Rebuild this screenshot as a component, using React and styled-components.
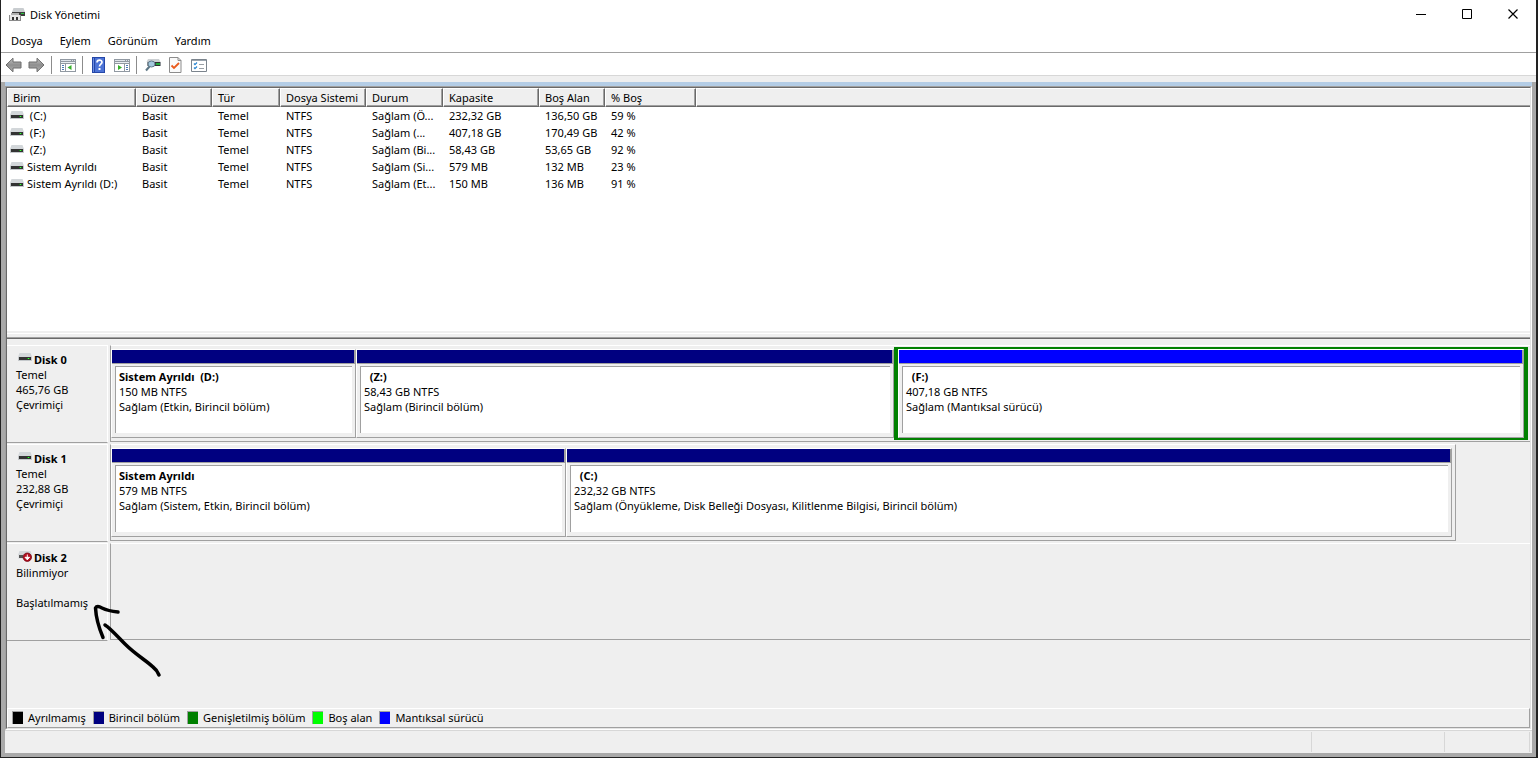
import React from 'react';
import styled, { createGlobalStyle } from 'styled-components';

const c = {
  face: '#efefef',
  frame: '#a9a9a9',
  shadow: '#a0a0a0',
  dark: '#696969',
  soft: '#e3e3e3',
  hair: '#d7d7d7',
  accent: '#b4cde6',
  primary: '#000080',
  extended: '#008000',
  free: '#00ff00',
  logical: '#0000ff',
};

const Global = createGlobalStyle`
  *, *::before, *::after { box-sizing: border-box; }
  body {
    margin: 0;
    background: #fff;
    color: #000;
    font: 11px/15px "Noto Sans", "Open Sans", sans-serif;
  }
  button { font: inherit; color: inherit; background: none; border: 0; padding: 0; }
`;

const Window = styled.div`
  position: relative;
  display: flex;
  flex-direction: column;
  min-height: 100vh;
  border: solid #222;
  border-width: 0 2px 1px 1px;
`;

const TitleBar = styled.header`
  display: flex;
  align-items: center;
  height: 29px;
  padding-left: 8px;
`;

const Title = styled.h1`
  flex: 1;
  margin: 0 0 0 5px;
  font-size: 11px;
  font-weight: 400;
`;

const CaptionButton = styled.button`
  display: grid;
  place-items: center;
  width: 46px;
  height: 29px;
`;

const MenuBar = styled.nav`
  display: flex;
  gap: 1px;
  height: 24px;
  padding: 0 2px;
  border-bottom: 1px solid ${c.shadow};
`;

const MenuButton = styled.button`
  padding: 0 8px;
`;

const ToolBar = styled.div`
  display: flex;
  align-items: center;
  height: 23px;
  padding: 2px 0 0 1px;
  border-bottom: 1px solid ${c.hair};
`;

const ToolButton = styled.button`
  display: grid;
  place-items: center;
  width: 23px;
  height: 20px;
`;

const ToolDivider = styled.span`
  width: 1px;
  height: 18px;
  margin: 0 4px 0 3px;
  background: #8c8c8c;
`;

const Strip = styled.div`
  height: 6px;
  background: ${c.face};
`;

const Client = styled.main`
  flex: 1;
  display: flex;
  flex-direction: column;
  padding: 0 4px 4px;
  background: ${c.frame};
`;

const Pane = styled.div`
  flex: 1;
  display: flex;
  flex-direction: column;
  border-top: 4px solid ${c.accent};
  background: ${c.face};
`;

const Sunken = styled.div`
  flex: 1;
  display: flex;
  flex-direction: column;
  border: 1px solid;
  border-color: ${c.shadow} #fff #fff ${c.shadow};
`;

const SunkenInner = styled.div`
  flex: 1;
  display: flex;
  flex-direction: column;
  border: 1px solid;
  border-color: ${c.dark} ${c.soft} ${c.soft} ${c.dark};
`;

const VolumeList = styled.section`
  height: 243px;
  background: #fff;
`;

const Table = styled.table`
  width: 100%;
  table-layout: fixed;
  border-collapse: separate;
  border-spacing: 0;
  text-align: left;
`;

const Col = styled.col`
  width: ${(p) => (p.$w ? `${p.$w}px` : 'auto')};
`;

const HeadCell = styled.th`
  height: 19px;
  padding: 0 0 0 5px;
  border: 1px solid;
  border-color: #fff ${c.dark} ${c.dark} #fff;
  box-shadow: inset -1px -1px ${c.shadow};
  background: ${c.face};
  font-weight: 400;
  white-space: nowrap;

  &:last-child { border-right: 0; box-shadow: inset 0 -1px ${c.shadow}; }
`;

const Cell = styled.td`
  height: 17px;
  padding: 0 0 0 6px;
  white-space: pre;
`;

const NameCell = styled.td`
  padding: 0 0 0 3px;
`;

const NameBox = styled.div`
  display: flex;
  align-items: center;
  gap: 3px;
  white-space: pre;
`;

const Splitter = styled.div`
  height: 8px;
  border-bottom: 1px solid ${c.dark};
  box-shadow: inset 0 -1px ${c.shadow}, inset 0 2px ${c.face}, inset 0 3px #fff;
`;

const DiskArea = styled.section`
  flex: 1;
  padding: 6px 0;
`;

const DiskRow = styled.article`
  display: grid;
  grid-template-columns: 103px 1fr;
  align-items: start;
  margin-bottom: 1px;
`;

const DiskLabel = styled.div`
  height: 98px;
  margin-right: 2px;
  padding: 6px 0 0 9px;
  border: solid #fff;
  border-width: 1px 1px 0 0;
  border-bottom: 1px solid ${c.shadow};
  white-space: pre-line;
`;

const DiskName = styled.h2`
  display: flex;
  gap: 2px;
  margin: 0;
  padding-left: 2px;
  font-size: 11px;
  font-weight: 700;
`;

const Track = styled.div`
  display: flex;
  align-items: center;
  width: ${(p) => p.$width};
  height: 97px;
  padding-right: ${(p) => (p.$closed ? 3 : 2)}px;
  border: 1px solid;
  border-color: #fff ${(p) => (p.$closed ? c.shadow : 'transparent')} ${c.shadow} ${c.shadow};
  border-right-width: ${(p) => (p.$closed ? 1 : 0)}px;
`;

const Volume = styled.div`
  flex: ${(p) => p.$size} 1 0;
  min-width: 0;
  height: 89px;
  border: 1px solid;
  border-color: #fff ${c.shadow} ${c.shadow} #fff;
`;

const Extended = styled.div`
  display: flex;
  flex: ${(p) => p.$size} 1 0;
  min-width: 0;
  padding: 2px 4px;
  background: ${c.extended};

  ${Volume} { background: ${c.face}; }
`;

const VolumeBar = styled.div`
  height: 14px;
  background: ${(p) => p.$color};
  border-bottom: 1px solid ${c.shadow};
  box-shadow: inset -1px 0 ${c.shadow};
`;

const VolumeBox = styled.div`
  height: 67px;
  margin: 2px 3px 4px;
  padding: 2px 0 0 3px;
  border: solid ${c.shadow};
  border-width: 1px 0 0 1px;
  background: #fff;
  overflow: hidden;
  white-space: pre;
`;

const VolumeName = styled.strong`
  display: block;
  font-weight: 700;
`;

const Legend = styled.ul`
  display: flex;
  align-items: center;
  gap: 7px;
  height: 20px;
  margin: 0;
  padding: 0 0 2px 4px;
  border: 1px solid;
  border-color: #fff ${c.shadow} ${c.shadow} #fff;
  list-style: none;
`;

const LegendItem = styled.li`
  display: flex;
  align-items: center;
  gap: 5px;
`;

const Swatch = styled.span`
  width: 11px;
  height: 13px;
  border: solid ${c.shadow};
  border-width: 1px 0 0 1px;
  background: ${(p) => p.$color};
`;

const StatusBar = styled.footer`
  display: flex;
  justify-content: flex-end;
  height: 23px;
  padding: 1px 2px 1px 0;
  border-top: 1px solid ${c.hair};
  background: ${c.face};
`;

const StatusCell = styled.span`
  width: ${(p) => p.$w}px;
  border-left: 1px solid ${c.hair};

  &:last-child { border-right: 1px solid ${c.hair}; }
`;

const Annotation = styled.svg`
  position: absolute;
  left: 89px;
  top: 600px;
  pointer-events: none;
`;

const DriveIcon = ({ missing }) => (
  <svg width="14" height="12" viewBox="0 0 14 12" aria-hidden="true">
    <path d="M1.5 1h11L14 5H0z" fill="#d3d7da" />
    {missing ? (
      <>
        <path d="M0 5h14v4H0z" fill="#e4e6e8" />
        <path d="M1 5h4v3H1z" fill="#555" />
        <circle cx="9.3" cy="7.200" r="4.200" fill="#b40f20" stroke="#700813" strokeWidth=".8" />
        <path d="M9.300 4.500v5M7 7.300h4.600L9.300 9.800z" stroke="#fff" strokeWidth="1" fill="#fff" />
      </>
    ) : (
      <>
        <path d="M0 5h14v4H0z" fill="#c5c9cc" />
        <path d="M1 5h12v3H1z" fill="#333" />
        <path d="M9 6h3v1H9z" fill="#138a13" />
        <path d="M10 6h1v1h-1z" fill="#3dff3d" />
      </>
    )}
  </svg>
);

const AppIcon = () => (
  <svg width="16" height="15" viewBox="0 0 16 15" aria-hidden="true">
    <path d="M4.500 1h10L16 5H3z" fill="#c9cdd0" />
    <path d="M3 5h13v4H3z" fill="#3d3d3d" />
    <path d="M12 6h3v1h-3z" fill="#27c53c" />
    <path d="M2 6h8v2H2z" fill="#b0b0b0" />
    <path d="M0 8h12v6H0z" fill="#8a8a8a" />
    <path d="M1 8h10v5H1z" fill="#e8e8e8" />
    <path d="M3 10h2v3H3zM7 10h2v3H7z" fill="#333" />
  </svg>
);

const ArrowIcon = ({ forward }) => (
  <svg width="17" height="16" viewBox="0 0 17 16" aria-hidden="true">
    <defs>
      <linearGradient id={forward ? 'fwd' : 'back'} x1="0" y1="0" x2="0" y2="1">
        <stop offset="0" stopColor="#c4c4c4" />
        <stop offset=".5" stopColor="#8f8f8f" />
        <stop offset="1" stopColor="#b4b4b4" />
      </linearGradient>
    </defs>
    <path
      d={forward ? 'M16 8L9 1.200V5H1v6h8v3.800z' : 'M1 8l7-6.800V5h8v6H8v3.800z'}
      fill={`url(#${forward ? 'fwd' : 'back'})`}
      stroke="#6c6c6c"
      strokeLinejoin="round"
    />
  </svg>
);

const PaneIcon = ({ play }) => (
  <svg width="16" height="13" viewBox="0 0 16 13" aria-hidden="true">
    <path d="M0 0h16v13H0z" fill="#9199a2" />
    <path d="M1 1h10v1H1zM12 1h1v1h-1zM14 1h1v1h-1z" fill="#dfe4ea" />
    <path d="M1 3h14v1H1z" fill="#e9edf1" />
    {play ? (
      <>
        <path d="M1 5h9v7H1zM11 5h4v7h-4z" fill="#fff" />
        <path d="M4 6l4 2.500L4 11z" fill="#35b02a" />
        <path d="M12 6h2v1h-2zM12 8h2v1h-2zM12 10h2v1h-2z" fill="#4b78b5" />
      </>
    ) : (
      <>
        <path d="M1 5h4v7H1zM6 5h9v7H6z" fill="#fff" />
        <path d="M11.500 6l-4 2.500 4 2.500z" fill="#35b02a" />
        <path d="M2 6h2v1H2zM2 8h2v1H2zM2 10h2v1H2z" fill="#4b78b5" />
      </>
    )}
  </svg>
);

const HelpIcon = () => (
  <svg width="14" height="16" viewBox="0 0 14 16" aria-hidden="true">
    <path d="M0 0h13v16H0z" fill="#2547a8" />
    <path d="M3 1h9v14H3z" fill="#4c73d6" />
    <path d="M1 1h1v14H1z" fill="#6b8de0" />
    <path d="M5 5.500c0-3.200 5-3.200 5-.3 0 2-2.500 2-2.500 4.300" fill="none" stroke="#fff" strokeWidth="1.700" />
    <path d="M6.500 11h2v2h-2z" fill="#fff" />
  </svg>
);

const RescanIcon = () => (
  <svg width="16" height="14" viewBox="0 0 16 14" aria-hidden="true">
    <path d="M3 1h11l1.500 3H1.500z" fill="#ccd0d3" />
    <path d="M2 4h14v4H2z" fill="#8f9498" />
    <path d="M9 4h6v4H9z" fill="#2f3331" />
    <path d="M11 5h4v2h-4z" fill="#23a83a" />
    <ellipse cx="6.500" cy="6" rx="3.500" ry="3" fill="#a4c8de" stroke="#61798a" />
    <path d="M4.500 8.500L1 12.500" stroke="#5d7685" strokeWidth="2" />
  </svg>
);

const CheckIcon = () => (
  <svg width="13" height="16" viewBox="0 0 13 16" aria-hidden="true">
    <path d="M.5.5h8.500l3 3v12H.5z" fill="#fafafa" stroke="#8c8c8c" />
    <path d="M9 .5v3h3" fill="none" stroke="#8c8c8c" />
    <path d="M2.500 8.500L5 11l5-5" fill="none" stroke="#ea5a1c" strokeWidth="1.800" />
  </svg>
);

const ListIcon = () => (
  <svg width="16" height="13" viewBox="0 0 16 13" aria-hidden="true">
    <path d="M.5.5h15v12H.5z" fill="#fff" stroke="#7b848d" />
    <path d="M1 1h14v1H1z" fill="#9aa4ae" />
    <path d="M3 4.500l1 1.200L6 3.500M3 8.500l1 1.200L6 7.500" fill="none" stroke="#2a86d1" strokeWidth="1.200" />
    <path d="M8 5h5v1H8zM8 9h5v1H8z" fill="#9aa0a6" />
  </svg>
);

const menus = ['Dosya', 'Eylem', 'Görünüm', 'Yardım'];

const columns = [
  ['Birim', 129],
  ['Düzen', 76],
  ['Tür', 68],
  ['Dosya Sistemi', 86],
  ['Durum', 77],
  ['Kapasite', 96],
  ['Boş Alan', 66],
  ['% Boş', 91],
];

const volumes = [
  [' (C:)', 'Basit', 'Temel', 'NTFS', 'Sağlam (Ö...', '232,32 GB', '136,50 GB', '59 %'],
  [' (F:)', 'Basit', 'Temel', 'NTFS', 'Sağlam (...', '407,18 GB', '170,49 GB', '42 %'],
  [' (Z:)', 'Basit', 'Temel', 'NTFS', 'Sağlam (Bi...', '58,43 GB', '53,65 GB', '92 %'],
  ['Sistem Ayrıldı', 'Basit', 'Temel', 'NTFS', 'Sağlam (Si...', '579 MB', '132 MB', '23 %'],
  ['Sistem Ayrıldı (D:)', 'Basit', 'Temel', 'NTFS', 'Sağlam (Et...', '150 MB', '136 MB', '91 %'],
];

const disks = [
  {
    name: 'Disk 0',
    info: 'Temel\n465,76 GB\nÇevrimiçi',
    width: '100%',
    parts: [
      { size: 243, name: 'Sistem Ayrıldı  (D:)', cap: '150 MB NTFS', state: 'Sağlam (Etkin, Birincil bölüm)' },
      { size: 536, name: '  (Z:)', cap: '58,43 GB NTFS', state: 'Sağlam (Birincil bölüm)' },
      { size: 626, name: '  (F:)', cap: '407,18 GB NTFS', state: 'Sağlam (Mantıksal sürücü)', logical: true },
    ],
  },
  {
    name: 'Disk 1',
    info: 'Temel\n232,88 GB\nÇevrimiçi',
    width: '94.8%',
    closed: true,
    parts: [
      { size: 453, name: 'Sistem Ayrıldı', cap: '579 MB NTFS', state: 'Sağlam (Sistem, Etkin, Birincil bölüm)' },
      {
        size: 884,
        name: '  (C:)',
        cap: '232,32 GB NTFS',
        state: 'Sağlam (Önyükleme, Disk Belleği Dosyası, Kilitlenme Bilgisi, Birincil bölüm)',
      },
    ],
  },
  { name: 'Disk 2', info: 'Bilinmiyor\n\nBaşlatılmamış', width: '100%', missing: true, parts: [] },
];

const legend = [
  ['Ayrılmamış', '#000'],
  ['Birincil bölüm', c.primary],
  ['Genişletilmiş bölüm', c.extended],
  ['Boş alan', c.free],
  ['Mantıksal sürücü', c.logical],
];

const Partition = ({ part }) => {
  const volume = (
    <Volume $size={part.logical ? 1 : part.size}>
      <VolumeBar $color={part.logical ? c.logical : c.primary} />
      <VolumeBox>
        <VolumeName>{part.name}</VolumeName>
        {`${part.cap}\n${part.state}`}
      </VolumeBox>
    </Volume>
  );
  return part.logical ? <Extended $size={part.size}>{volume}</Extended> : volume;
};

export default function App() {
  return (
    <>
      <Global />
      <Window>
        <TitleBar>
          <AppIcon />
          <Title>Disk Yönetimi</Title>
          <CaptionButton aria-label="Simge durumuna küçült">
            <svg width="11" height="11"><path d="M0 5h10v1H0z" /></svg>
          </CaptionButton>
          <CaptionButton aria-label="Ekranı kapla">
            <svg width="11" height="11"><path d="M.5.5h9v9h-9z" fill="none" stroke="#000" /></svg>
          </CaptionButton>
          <CaptionButton aria-label="Kapat">
            <svg width="11" height="11"><path d="M.5.5l9 9M9.500.5l-9 9" fill="none" stroke="#000" strokeWidth="1.200" /></svg>
          </CaptionButton>
        </TitleBar>
        <MenuBar>
          {menus.map((m) => <MenuButton key={m}>{m}</MenuButton>)}
        </MenuBar>
        <ToolBar>
          <ToolButton aria-label="Geri"><ArrowIcon /></ToolButton>
          <ToolButton aria-label="İleri"><ArrowIcon forward /></ToolButton>
          <ToolDivider />
          <ToolButton aria-label="Konsol ağacı"><PaneIcon /></ToolButton>
          <ToolDivider />
          <ToolButton aria-label="Yardım"><HelpIcon /></ToolButton>
          <ToolButton aria-label="Eylem bölmesi"><PaneIcon play /></ToolButton>
          <ToolDivider />
          <ToolButton aria-label="Yeniden tara"><RescanIcon /></ToolButton>
          <ToolButton aria-label="Özellikler"><CheckIcon /></ToolButton>
          <ToolButton aria-label="Ayarlar"><ListIcon /></ToolButton>
        </ToolBar>
        <Strip />
        <Client>
          <Pane>
            <Sunken>
              <SunkenInner>
                <VolumeList>
                  <Table>
                    <colgroup>
                      {columns.map(([n, w]) => <Col key={n} $w={w} />)}
                      <Col />
                    </colgroup>
                    <thead>
                      <tr>
                        {columns.map(([n]) => <HeadCell key={n} scope="col">{n}</HeadCell>)}
                        <HeadCell as="td" />
                      </tr>
                    </thead>
                    <tbody>
                      {volumes.map(([name, ...rest]) => (
                        <tr key={name}>
                          <NameCell><NameBox><DriveIcon />{name}</NameBox></NameCell>
                          {rest.map((v, i) => <Cell key={i}>{v}</Cell>)}
                          <Cell />
                        </tr>
                      ))}
                    </tbody>
                  </Table>
                </VolumeList>
                <Splitter />
                <DiskArea>
                  {disks.map((d) => (
                    <DiskRow key={d.name}>
                      <DiskLabel>
                        <DiskName><DriveIcon missing={d.missing} />{d.name}</DiskName>
                        {d.info}
                      </DiskLabel>
                      <Track $width={d.width} $closed={d.closed}>
                        {d.parts.map((p) => <Partition key={p.name} part={p} />)}
                      </Track>
                    </DiskRow>
                  ))}
                </DiskArea>
                <Legend>
                  {legend.map(([n, color]) => (
                    <LegendItem key={n}><Swatch $color={color} />{n}</LegendItem>
                  ))}
                </Legend>
              </SunkenInner>
            </Sunken>
          </Pane>
          <StatusBar>
            <StatusCell $w={133} />
            <StatusCell $w={86} />
          </StatusBar>
        </Client>
        <Annotation width="76" height="80" viewBox="90 600 76 80" fill="none" stroke="#000" strokeWidth="3.500" strokeLinecap="round" strokeLinejoin="round" aria-hidden="true">
          <path d="M118 612Q108 611 102 608Q97 605 95.500 608C96 618 99 628 103 637.500" />
          <path d="M105 625C110 628 118 637 125 644C136 655 147 661 153 667Q157 670 159 675" />
        </Annotation>
      </Window>
    </>
  );
}
